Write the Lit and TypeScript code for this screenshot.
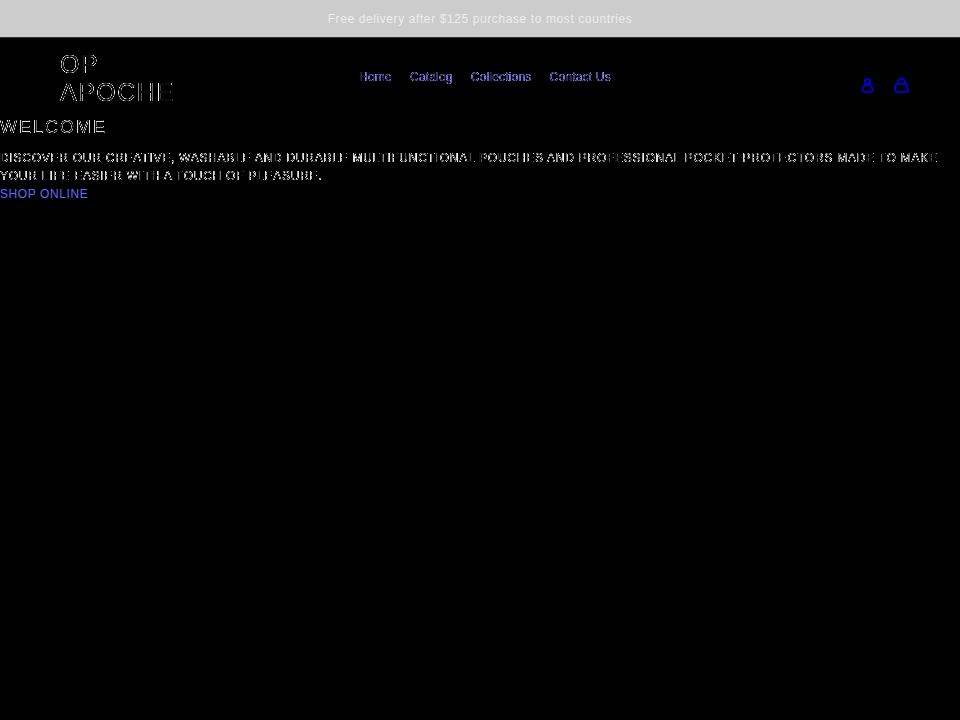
import { LitElement, html, css } from "lit";
import { customElement } from "lit/decorators.js";

@customElement("app-root")
export class AppRoot extends LitElement {
  static styles = css`
    :host { display: block; width: 960px; height: 720px; background: #000; overflow: hidden; font-family: "Liberation Sans", Arial, sans-serif; color: #fff; }
    .defs { position: absolute; width: 0; height: 0; }
    .banner { height: 37px; background: #ccc; border-bottom: 1px solid #333; display: flex; align-items: center; justify-content: center; font-size: 12px; letter-spacing: 0.6px; color: #eee; }
    .header { position: relative; display: grid; grid-template-columns: 1fr auto 1fr; padding: 8px 50px 0 60px; height: 70px; box-sizing: content-box; }
    .logo { font-size: 25px; line-height: 28px; width: 120px; letter-spacing: 1.5px; filter: url(#edge); margin: 4px 0 0; }
    .nav { display: flex; gap: 18px; font-size: 12px; padding-top: 24px; color: #aab; }
    .nav a { color: #88f; filter: url(#edge2); letter-spacing: 0.2px; }
    .icons { display: flex; justify-content: flex-end; gap: 17px; align-items: center; padding-top: 16px; height: 46px; }
    .icons svg { width: 17px; height: 17px; fill: none; stroke: #00f; stroke-width: 1.6; }
    h1 { margin: 0; font-weight: 400; font-size: 18px; letter-spacing: 2px; line-height: 22px; filter: url(#edge); padding-top: 0; }
    p { margin: 11px 0 0; font-size: 12px; line-height: 18px; letter-spacing: 0.75px; text-transform: uppercase; filter: url(#edge); }
    .shop { display: block; font-size: 12px; line-height: 18px; letter-spacing: 0.6px; color: #66f; text-decoration: none; }
  `;
  render() {
    return html`
      <svg class="defs"><defs>
        <filter id="edge" color-interpolation-filters="sRGB" x="0" y="0" width="100%" height="100%"><feComponentTransfer><feFuncA type="table" tableValues="0 1 0.05"/></feComponentTransfer></filter>
        <filter id="edge2" color-interpolation-filters="sRGB" x="0" y="0" width="100%" height="100%"><feComponentTransfer><feFuncA type="table" tableValues="0 1 0.2"/></feComponentTransfer></filter>
      </defs></svg>
      <div class="banner">Free delivery after $125 purchase to most countries</div>
      <header class="header">
        <div class="logo">OP APOCHE</div>
        <nav class="nav"><a>Home</a><a>Catalog</a><a>Collections</a><a>Contact Us</a></nav>
        <div class="icons">
          <svg viewBox="0 0 17 17"><circle cx="8.5" cy="4.5" r="2.8"/><path d="M8.5 8c-3 0-5 2-5 5 0 1.5 1 2 2 2h6c1 0 2-.5 2-2 0-3-2-5-5-5z"/></svg>
          <svg viewBox="0 0 17 17"><path d="M5 7V5a3.5 3.5 0 0 1 7 0v2"/><path d="M3 7h11l1 6c0 1.500-1 2-2 2H4c-1 0-2-.5-2-2z"/></svg>
        </div>
      </header>
      <main>
        <h1>WELCOME</h1>
        <p>Discover our creative, washable and durable multifunctional pouches and professional pocket protectors made to make your life easier with a touch of pleasure.</p>
        <a class="shop">SHOP ONLINE</a>
      </main>
    `;
  }
}
